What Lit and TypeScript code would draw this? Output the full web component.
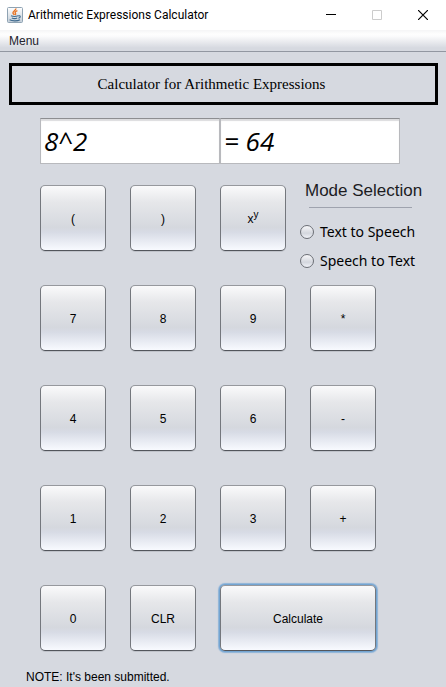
import { LitElement, html, css, svg } from "lit";
import { customElement, property, state } from "lit/decorators.js";
import { classMap } from "lit/directives/class-map.js";

@customElement("window-bar")
class WindowBar extends LitElement {
  @property() heading = "";

  static styles = css`
    :host {
      display: flex;
      align-items: center;
      height: 30px;
      padding-left: 7px;
      background: #fff;
      font: 12px/16px Roboto, sans-serif;
      color: #000;
    }
    .logo {
      width: 16px;
      height: 16px;
      margin-right: 5px;
      flex: none;
    }
    .heading {
      flex: 1;
      white-space: nowrap;
    }
    button {
      width: 46px;
      height: 30px;
      padding: 0;
      border: 0;
      background: none;
      display: flex;
      align-items: center;
      justify-content: center;
      color: #000;
    }
    button:disabled {
      color: #ccc;
    }
    button svg {
      width: 10px;
      height: 10px;
      fill: none;
      stroke: currentColor;
    }
  `;

  render() {
    return html`
      <svg class="logo" viewBox="0 0 16 16" aria-hidden="true">
        <defs>
          <linearGradient id="tile" x1="0" y1="0" x2="0" y2="1">
            <stop offset="0" stop-color="#ffffff" />
            <stop offset="1" stop-color="#c3ced8" />
          </linearGradient>
        </defs>
        <rect x=".5" y=".5" width="15" height="15" rx="1" fill="url(#tile)" stroke="#8fa3b3" />
        <path d="M8.8 1.4C9.6 3.2 5.2 4.4 6 6.2C6.3 6.9 7.1 7.4 7.3 8M10.4 3.6C8.4 4.4 7.6 5.2 8.4 6.2C8.9 6.9 8.5 7.6 8.1 7.9" fill="none" stroke="#e87424" stroke-width="1.4" />
        <path d="M4 8.8C5.6 9.5 9.4 9.5 11 8.8M4.8 10.9C6.2 11.6 9 11.6 10.2 10.9M2.6 12.8C5 14.2 10.6 14.2 13 12.7M11.2 8.9C13.8 8.1 14 10.6 11.4 11.2" fill="none" stroke="#3f6b8f" stroke-width="1.1" />
      </svg>
      <span class="heading">${this.heading}</span>
      <button aria-label="Minimize">
        <svg viewBox="0 0 10 10">${svg`<path d="M0 4.5H10" />`}</svg>
      </button>
      <button aria-label="Maximize" disabled>
        <svg viewBox="0 0 10 10">${svg`<path d="M.5 .5H9.5V9.5H.5Z" />`}</svg>
      </button>
      <button aria-label="Close">
        <svg viewBox="0 0 10 10">${svg`<path d="M0 0L10 10M10 0L0 10" stroke-width="1.2" />`}</svg>
      </button>
    `;
  }
}

@customElement("mode-panel")
class ModePanel extends LitElement {
  @state() private mode = "";

  private modes = ["Text to Speech", "Speech to Text"];

  static styles = css`
    :host {
      display: block;
      color: #000;
    }
    fieldset {
      margin: 0;
      padding: 0;
      border: 0;
      min-width: 0;
    }
    legend {
      padding: 0 0 0 5px;
      font: 17px/16px "Liberation Sans", Arial, sans-serif;
      color: #1c1c1f;
      white-space: nowrap;
    }
    hr {
      height: 1px;
      margin: 8px 12px 9px 9px;
      border: 0;
      background: #9fa3ae;
    }
    label {
      display: flex;
      align-items: center;
      gap: 6px;
      height: 29px;
      font: 14px/20px "Noto Sans", sans-serif;
      white-space: nowrap;
    }
    input {
      appearance: none;
      flex: none;
      width: 14px;
      height: 14px;
      margin: 0;
      border: 1px solid #6b6e75;
      border-radius: 50%;
      background: linear-gradient(#f8f8fa, #d3d6dd 60%, #f0f2f8);
    }
    input:checked {
      background: radial-gradient(#22262e 30%, #d3d6dd 40%);
    }
  `;

  render() {
    return html`
      <fieldset>
        <legend>Mode Selection</legend>
        <hr />
        ${this.modes.map(
          (name) => html`
            <label>
              <input
                type="radio"
                name="mode"
                .checked=${this.mode === name}
                @change=${() => (this.mode = name)}
              />
              ${name}
            </label>
          `
        )}
      </fieldset>
    `;
  }
}

@customElement("app-root")
class AppRoot extends LitElement {
  private keys = [
    "(", ")", "pow", "mode",
    "7", "8", "9", "*",
    "4", "5", "6", "-",
    "1", "2", "3", "+",
    "0", "CLR", "Calculate",
  ];

  static styles = css`
    :host {
      display: block;
      min-height: 100vh;
      background: #d6d9e0;
      font: 12px/16px "Liberation Sans", Arial, sans-serif;
      color: #000;
    }
    .menubar {
      display: flex;
      height: 21px;
      border-bottom: 1px solid #9297a1;
      background: linear-gradient(#f5f5f6, #fefefe 20%, #fbfbfc 30%, #d6d9e0 85%);
    }
    .menubar button {
      padding: 0 9px;
      border: 0;
      background: none;
      font: inherit;
      color: #23232d;
    }
    h1 {
      margin: 11px 8px 13px 9px;
      padding: 8px 24px 8px 0;
      border: 3px solid #000;
      font: 15px/20px "Liberation Serif", "Times New Roman", serif;
      text-align: center;
    }
    .screen {
      display: flex;
      margin: 0 46px 21px 40px;
    }
    .screen input {
      flex: 1;
      min-width: 0;
      height: 46px;
      box-sizing: border-box;
      padding: 0 3px;
      border: 1px solid #b8b9bd;
      border-top-color: #8d8e91;
      border-radius: 0;
      outline: 0;
      background: #fff;
      box-shadow: inset 0 2px 1px #dcdcde;
      font: italic 26px/32px "Ink Free", "Open Sans", cursive;
      color: #000;
    }
    .keypad {
      display: grid;
      grid-template-columns: repeat(4, 1fr);
      grid-auto-rows: 66px;
      gap: 34px 24px;
      margin: 0 70px 18px 40px;
    }
    .key {
      min-width: 0;
      padding: 2px 0 0;
      border: 1px solid;
      border-color: #96989d #74777d #53565c;
      border-radius: 5px;
      background: linear-gradient(#fafafb, #e6e7ea 25%, #d5d8de 65%, #d7dbe5 72%, #f8faff);
      box-shadow: 0 1px 0 #c0c3ca;
      font: inherit;
      color: #000;
    }
    .key sup {
      font-size: 10px;
      line-height: 0;
      vertical-align: 5px;
    }
    .wide {
      grid-column: span 2;
      box-shadow: 0 0 0 1px #73a4d1, 0 0 1px 2px #8db3d8;
    }
    mode-panel {
      margin: -2px -48px 0 -10px;
    }
    .note {
      margin: 0 26px;
    }
  `;

  render() {
    return html`
      <window-bar heading="Arithmetic Expressions Calculator"></window-bar>
      <nav class="menubar"><button>Menu</button></nav>
      <main>
        <h1>Calculator for Arithmetic Expressions</h1>
        <div class="screen">
          <input aria-label="Expression" value="8^2" />
          <input aria-label="Result" value="= 64" readonly />
        </div>
        <div class="keypad">
          ${this.keys.map((key) =>
            key === "mode"
              ? html`<mode-panel></mode-panel>`
              : html`<button class=${classMap({ key: true, wide: key === "Calculate" })}>
                  ${key === "pow" ? html`<span>x<sup>y</sup></span>` : key}
                </button>`
          )}
        </div>
        <div class="note" role="status">NOTE: It's been submitted.</div>
      </main>
    `;
  }
}
